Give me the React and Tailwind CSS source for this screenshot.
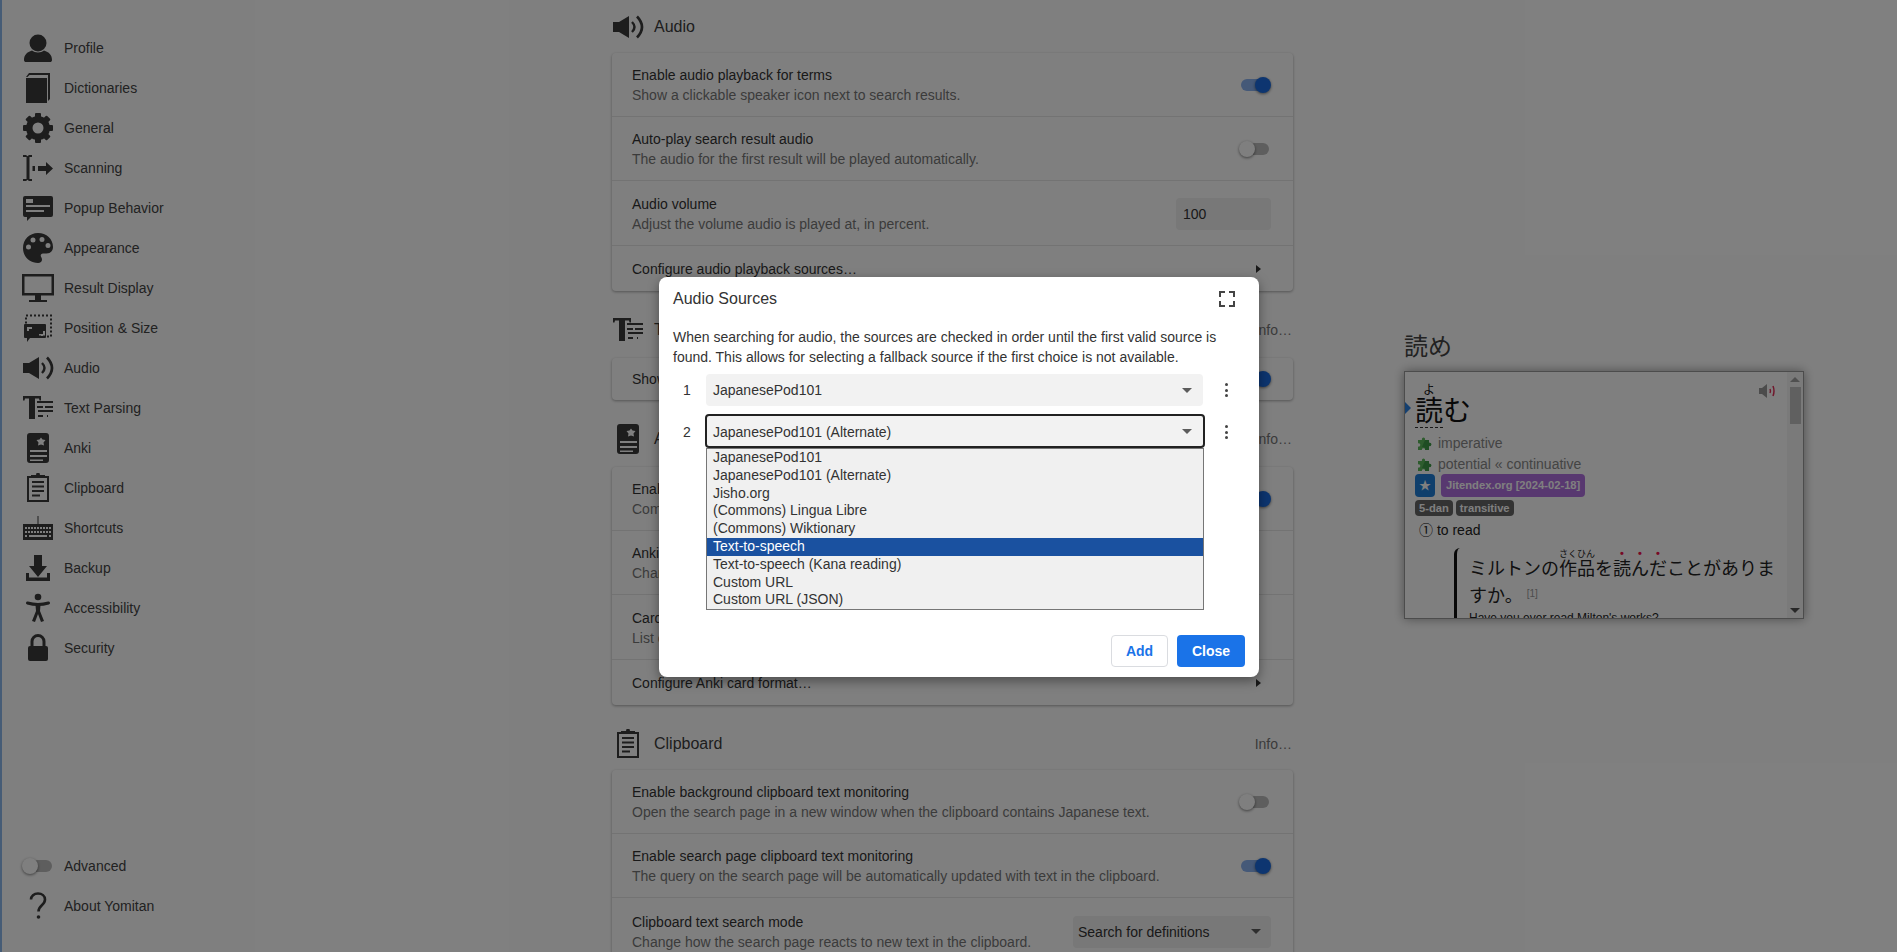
import React from "react";

const FONT = "[font-family:'Liberation_Sans',Arial,sans-serif]";

function circ(x, y, r) {
  return `M${x - r} ${y}a${r} ${r} 0 1 0 ${2 * r} 0a${r} ${r} 0 1 0 ${-2 * r} 0z`;
}

function Svg({ children, className = "w-8 h-8" }) {
  return (
    <svg viewBox="0 0 32 32" className={`${className} shrink-0 fill-[#3a3a3a] stroke-none`}>
      {children}
    </svg>
  );
}

const ProfileIcon = () => (
  <Svg>
    <circle cx="16" cy="11" r="8.5" />
    <path d="M2 28c0-5 3-8 8-9.500c3 2.500 9 2.500 12 0c5 1.500 8 4.500 8 9.500c0 1.500-1 2-2 2H4c-1 0-2-.5-2-2z" />
  </Svg>
);
const BookIcon = () => (
  <Svg>
    <path d="M4 5l3-4h21v26l-2 2V3H7.500L5.500 5z" />
    <path d="M4 6h21v25H4z" />
  </Svg>
);
const GearIcon = () => (
  <Svg>
    <circle cx="16" cy="16" r="8.750" className="fill-none stroke-[#3a3a3a]" strokeWidth="6.500" />
    {[0, 45, 90, 135, 180, 225, 270, 315].map((a) => (
      <rect key={a} x="13" y="1" width="6" height="6" rx="1" transform={`rotate(${a} 16 16)`} />
    ))}
  </Svg>
);
const ScanIcon = () => (
  <Svg>
    <path d="M1 3h3l1.500 1.200L7 3h3v2H7.500v22H10v2H7l-1.500-1.200L4 29H1v-2h3.500V5H1z" />
    <path d="M10.500 14h2.500v5h-2.500zM16 14h8v-4l7 6.500-7 6.500v-4h-8z" />
  </Svg>
);
const PopupIcon = () => (
  <Svg>
    <path
      fillRule="evenodd"
      d="M3 4h26a2 2 0 0 1 2 2v17a2 2 0 0 1-2 2H9l-4 4v-4H3a2 2 0 0 1-2-2V6a2 2 0 0 1 2-2zM4 7v4h7V7zM4 13v2h24v-2zM4 18v2h18v-2z"
    />
  </Svg>
);
const PaletteIcon = () => (
  <Svg>
    <path
      fillRule="evenodd"
      d={`M16 1C7.500 1 1 7.500 1 16s6.500 15 15 15c2.500 0 4-1.500 4-3.500 0-1-.5-2-1-2.800-.7-1.200-.2-3.200 2-3.200h3.500c4.500 0 6.500-3 6.500-6.500C31 7 24.500 1 16 1z${circ(6.500, 15, 2.500)}${circ(11, 8, 2.500)}${circ(20, 7.500, 2.500)}${circ(26, 13.500, 2.500)}`}
    />
  </Svg>
);
const MonitorIcon = () => (
  <Svg>
    <path
      fillRule="evenodd"
      d="M0 2h32v21.500H19V28h6v2H7v-2h6v-4.500H0zM2.500 4.500V21h27V4.500z"
    />
  </Svg>
);
const PositionIcon = () => (
  <Svg>
    <rect x="4" y="3.500" width="25" height="21" className="fill-none stroke-[#3a3a3a]" strokeWidth="2" strokeDasharray="2 2" />
    <path
      fillRule="evenodd"
      d="M3 12h20a1 1 0 0 1 1 1v12a1 1 0 0 1-1 1H8l-3 4v-4H3a1 1 0 0 1-1-1V13a1 1 0 0 1 1-1zM5 15v4h2v-2h3v-2zM21 19v3h-4v2h6v-5z"
    />
  </Svg>
);
const AudioIcon = () => (
  <Svg>
    <path d="M1 11h6l10-6v22L7 21H1z" />
    <path d="M20 11q5 5 0 10" className="fill-none stroke-[#3a3a3a]" strokeWidth="2.400" />
    <path d="M25 5.500q10 10.500 0 21" className="fill-none stroke-[#3a3a3a]" strokeWidth="2.600" />
  </Svg>
);
const ParseIcon = () => (
  <Svg>
    <path d="M1 4h18v4.500h-1.500L17 6.500h-4V27h-6V6.500H3L2.500 8.500H1z" />
    <path d="M15 10h16M15 15h6M23 15h8M16 19h15M16 24h5M25 24h1" className="fill-none stroke-[#3a3a3a]" strokeWidth="2" />
  </Svg>
);
const AnkiIcon = () => (
  <Svg>
    <path
      fillRule="evenodd"
      d="M8 1h16a3 3 0 0 1 3 3v24a3 3 0 0 1-3 3H8a3 3 0 0 1-3-3V4a3 3 0 0 1 3-3zM19 5.500l-1.500 2-3 .5 2 2.500-.5 3 3-1 3 1-.5-3 2-2.500-3-.5zM8 18v2h17v-2zM8 23v2h17v-2zM8 27.500v1.500h13v-1.500z"
    />
  </Svg>
);
const ClipIcon = () => (
  <Svg>
    <path d="M14.500 1h3l.5 2h5v3H9V3h5z" />
    <path d="M9 4H5v26h22V4h-4v2h2v22H7V6h2z" />
    <path d="M10 9h12v2H10zM10 13.500h12v2H10zM10 18h12v2H10zM10 22.500h8v2h-8z" />
  </Svg>
);
const KeyboardIcon = () => (
  <Svg>
    <path
      fillRule="evenodd"
      d={`M15.500 4h1v8H31v16H1V12h14.500z${[0, 1, 2, 3, 4, 5, 6, 7, 8]
        .map((i) => `M${3 + i * 3} 15h2v2h-2z`)
        .join("")}${[0, 1, 2, 3, 4, 5, 6, 7, 8]
        .map((i) => `M${3 + i * 3} 19h2v2h-2z`)
        .join("")}M3 23h2v2H3zM7 23h18v2H7zM27 23h2v2h-2z`}
    />
  </Svg>
);
const BackupIcon = () => (
  <Svg>
    <path d="M12 3h8v11h5l-9 11-9-11h5z" />
    <path d="M4 21h3v4.500h18V21h3v8H4z" />
  </Svg>
);
const AccessIcon = () => (
  <Svg>
    <circle cx="16" cy="5" r="3.300" />
    <path d="M5.500 11q10.500 3 21 0" className="fill-none stroke-[#3a3a3a]" strokeWidth="3" strokeLinecap="round" />
    <path d="M13.500 13h5l-.5 6 4 10-3 1-3-8-3 8-3-1 4-10z" />
  </Svg>
);
const LockIcon = () => (
  <Svg>
    <path d="M8 14a2 2 0 0 0-2 2v11a2 2 0 0 0 2 2h16a2 2 0 0 0 2-2V16a2 2 0 0 0-2-2z" />
    <path d="M10 15V9.500a6 6 0 0 1 12 0V15" className="fill-none stroke-[#3a3a3a]" strokeWidth="3" />
  </Svg>
);
const QuestionIcon = () => (
  <Svg>
    <path d="M9 9.500C9 6 12 3.500 16 3.500s7 2.500 7 6c0 6-6.500 5.500-6.500 12" className="fill-none stroke-[#3a3a3a]" strokeWidth="2.600" />
    <circle cx="16.500" cy="27" r="1.800" />
  </Svg>
);

function Toggle({ on, className = "mr-0.5" }) {
  return (
    <div className={`relative h-3 w-7 shrink-0 ${className}`}>
      <div className={`h-3 w-7 rounded-full ${on ? "bg-[#8ab2f0]" : "bg-[#bdbdbd]"}`} />
      <div
        className={`absolute -top-0.5 h-4 w-4 rounded-full shadow-[0_1px_3px_rgba(0,0,0,0.5)] ${
          on ? "-right-0.5 bg-[#1a6be0]" : "-left-0.5 bg-white"
        }`}
      />
    </div>
  );
}

const navTop = [
  ["Profile", ProfileIcon],
  ["Dictionaries", BookIcon],
  ["General", GearIcon],
  ["Scanning", ScanIcon],
  ["Popup Behavior", PopupIcon],
  ["Appearance", PaletteIcon],
  ["Result Display", MonitorIcon],
  ["Position & Size", PositionIcon],
  ["Audio", AudioIcon],
  ["Text Parsing", ParseIcon],
  ["Anki", AnkiIcon],
  ["Clipboard", ClipIcon],
  ["Shortcuts", KeyboardIcon],
  ["Backup", BackupIcon],
  ["Accessibility", AccessIcon],
  ["Security", LockIcon],
];

function NavItem({ label, children }) {
  return (
    <div className="flex h-10 items-center gap-2.5 pl-5 text-sm text-[#444]">
      {children}
      <span>{label}</span>
    </div>
  );
}

function Sidebar() {
  return (
    <aside className="flex h-full w-[612px] shrink-0 flex-col justify-between border-l-2 border-[#8cb8ec] pb-[26px] pt-[28px]">
      <nav>
        {navTop.map(([label, Icon]) => (
          <NavItem key={label} label={label}>
            <Icon />
          </NavItem>
        ))}
      </nav>
      <div>
        <NavItem label="Advanced">
          <div className="flex w-8 justify-center">
            <Toggle className="" />
          </div>
        </NavItem>
        <NavItem label="About Yomitan">
          <QuestionIcon />
        </NavItem>
      </div>
    </aside>
  );
}

function SectionHead({ icon, title, info, className = "mb-3 mt-[23px]" }) {
  return (
    <div className={`flex h-8 items-center gap-2.5 ${className}`}>
      {icon}
      <span className="flex-1 text-base text-[#3c3c3c]">{title}</span>
      {info && <span className="pr-px text-sm text-[#777]">Info…</span>}
    </div>
  );
}

function Card({ children }) {
  return (
    <div className="divide-y divide-[#e6e6e6] rounded bg-white shadow-[0_1px_3px_rgba(0,0,0,0.35)]">
      {children}
    </div>
  );
}

function Row({ title, desc, children, className = "h-16" }) {
  return (
    <div className={`flex items-center justify-between pl-5 pr-[22px] text-sm ${className}`}>
      <div>
        <div className="leading-5 text-[#333]">{title}</div>
        <div className="leading-5 text-[#777]">{desc}</div>
      </div>
      {children}
    </div>
  );
}

function LinkRow({ title }) {
  return (
    <div className="flex h-[45px] items-center justify-between pl-5 pr-[32px] text-sm text-[#333]">
      <span>{title}</span>
      <span className="h-0 w-0 border-y-[4.500px] border-l-[5px] border-y-transparent border-l-[#333]" />
    </div>
  );
}

function Caret({ className = "border-t-[#5c5c5c]" }) {
  return <span className={`h-0 w-0 border-x-[5px] border-t-[5px] border-x-transparent ${className}`} />;
}

function Main() {
  return (
    <main className="w-[681px] shrink-0">
      <SectionHead className="mb-2.5 mt-[11px]" icon={<AudioIcon />} title="Audio" />
      <Card>
        <Row title="Enable audio playback for terms" desc="Show a clickable speaker icon next to search results.">
          <Toggle on />
        </Row>
        <Row title="Auto-play search result audio" desc="The audio for the first result will be played automatically.">
          <Toggle />
        </Row>
        <Row className="h-[65px] pt-0.5" title="Audio volume" desc="Adjust the volume audio is played at, in percent.">
          <div className="flex h-8 w-[95px] items-center rounded bg-[#f0f0f0] pl-[7px] text-[#333]">100</div>
        </Row>
        <LinkRow title="Configure audio playback sources…" />
      </Card>

      <SectionHead icon={<ParseIcon />} title="Text Parsing" info />
      <Card>
        <div className="flex h-[42px] items-center justify-between pl-5 pr-[22px] text-sm text-[#333]">
          <span>Show space between parsed tokens</span>
          <Toggle on />
        </div>
      </Card>

      <SectionHead icon={<AnkiIcon />} title="Anki" info />
      <Card>
        <Row title="Enable Anki integration" desc="Commonly used with flashcards.">
          <Toggle on />
        </Row>
        <Row title="AnkiConnect server address" desc="Change the address of the server." />
        <Row className="h-[65px] pt-0.5" title="Card tags" desc="List of tags to add to each card." />
        <LinkRow title="Configure Anki card format…" />
      </Card>

      <SectionHead className="mb-2.5 mt-[23px]" icon={<ClipIcon />} title="Clipboard" info />
      <Card>
        <Row
          title="Enable background clipboard text monitoring"
          desc="Open the search page in a new window when the clipboard contains Japanese text."
        >
          <Toggle />
        </Row>
        <Row
          title="Enable search page clipboard text monitoring"
          desc="The query on the search page will be automatically updated with text in the clipboard."
        >
          <Toggle on />
        </Row>
        <Row
          className="h-[65px] pt-0.5"
          title="Clipboard text search mode"
          desc="Change how the search page reacts to new text in the clipboard."
        >
          <div className="flex h-8 w-[198px] items-center justify-between rounded bg-[#f0f0f0] pl-[5px] pr-2.5 text-[#333]">
            <span>Search for definitions</span>
            <Caret />
          </div>
        </Row>
      </Card>
    </main>
  );
}

function Puzzle() {
  return (
    <svg viewBox="0 0 16 16" className="h-4 w-4 shrink-0">
      <path d="M1 5h4c-1-3.500 4-3.500 3 0h4v3c3-1 3 4 0 3v4H8c1-2.500-4-2.500-3 0H1v-3.500c3 1 3-4 0-3z" fill="#5cb85c" />
      <path d="M8 5h4v3c3-1 3 4 0 3v4H8c1-2.500-1-3-3-3z" fill="#3f9a48" />
    </svg>
  );
}

function Preview() {
  return (
    <section className="ml-[111px] w-[400px] shrink-0 pt-[331px] [font-family:'Liberation_Sans','Noto_Sans_CJK_JP',sans-serif]">
      <div className="h-[40px] text-2xl leading-8 text-[#444]">読め</div>
      <div className="flex h-[248px] overflow-hidden border border-[#999] bg-white shadow-[0_0_10px_rgba(0,0,0,0.4)]">
        <div className="relative flex-1 overflow-hidden pl-2.5 pt-[11px]">
          <span className="absolute left-0 top-[30px] h-0 w-0 border-y-[6px] border-l-[6px] border-y-transparent border-l-[#2a80e0]" />
          <svg viewBox="0 0 18 14" className="absolute right-[10px] top-3 h-3.5 w-[18px]">
            <path d="M0 4h3l5-4v14l-5-4H0z" fill="#999" />
            <path d="M11 5q1 2 0 4M14 2q2 5 0 10" fill="none" stroke="#e03058" strokeWidth="1.500" />
          </svg>
          <div className="text-[28px] leading-[46px] text-[#111]">
            <ruby className="border-b border-dashed border-[#333]">
              読<rt className="text-xs leading-3">よ</rt>
            </ruby>
            む
          </div>
          <div className="-mt-[3px] flex h-[21px] items-center gap-[5px] pl-0.5 text-sm text-[#888]">
            <Puzzle />
            imperative
          </div>
          <div className="flex h-[21px] items-center gap-[5px] pl-0.5 text-sm text-[#888]">
            <Puzzle />
            potential « continuative
          </div>
          <div className="flex h-[23px] gap-1.5">
            <span className="flex w-5 items-center justify-center rounded bg-[#1e7fd8] text-xs text-white">★</span>
            <span className="flex items-center rounded bg-[#b070e0] px-[5px] text-[11.200px] font-bold text-white">
              Jitendex.org [2024-02-18]
            </span>
          </div>
          <div className="mt-[3px] flex h-4 gap-[3px] text-[11.200px] font-bold text-white">
            <span className="flex items-center rounded bg-[#666] px-[4px]">5-dan</span>
            <span className="flex items-center rounded bg-[#666] px-[4px]">transitive</span>
          </div>
          <div className="mt-1 pl-1 text-sm leading-5 text-[#222]">① to read</div>
          <div className="ml-[39px] mt-[8px] w-[338px] rounded-tl-md border-l-[3px] border-[#111] pl-3">
            <div className="text-lg leading-[27px] text-[#222]">
              ミルトンの
              <ruby>
                作品<rt className="text-[9px] leading-[9px]">さくひん</rt>
              </ruby>
              を
              {["読", "ん", "だ"].map((c) => (
                <ruby key={c}>
                  {c}
                  <rt className="text-[11px] font-bold leading-[9px] text-[#f0104a]">•</rt>
                </ruby>
              ))}
              ことがありますか。
              <sup className="ml-1 text-[10px] text-[#999]">[1]</sup>
            </div>
            <div className="text-xs leading-4 text-[#222]">Have you ever read Milton's works?</div>
          </div>
        </div>
        <div className="flex w-[16px] shrink-0 flex-col items-center bg-[#f4f4f4] py-[5px]">
          <Caret className="rotate-180 border-t-[#a0a0a0]" />
          <div className="mt-[5px] h-[37px] w-[11px] bg-[#c1c1c1]" />
          <div className="flex-1" />
          <Caret className="border-t-[#505050]" />
        </div>
      </div>
    </section>
  );
}

const sources = [
  "JapanesePod101",
  "JapanesePod101 (Alternate)",
  "Jisho.org",
  "(Commons) Lingua Libre",
  "(Commons) Wiktionary",
  "Text-to-speech",
  "Text-to-speech (Kana reading)",
  "Custom URL",
  "Custom URL (JSON)",
];

function Kebab() {
  return (
    <span className="flex flex-col gap-[2.500px]">
      <i className="h-[3px] w-[3px] rounded-full bg-[#444]" />
      <i className="h-[3px] w-[3px] rounded-full bg-[#444]" />
      <i className="h-[3px] w-[3px] rounded-full bg-[#444]" />
    </span>
  );
}

function Dialog() {
  return (
    <div className="absolute left-[659px] top-[277px] h-[400px] w-[600px] rounded-lg bg-white text-sm text-[#333] shadow-[0_4px_12px_rgba(0,0,0,0.4)]">
      <div className="flex items-start justify-between pl-[14px] pr-6 pt-[14px]">
        <span className="pt-px text-base [line-height:14px]">Audio Sources</span>
        <svg viewBox="0 0 16 16" className="h-4 w-4 fill-none stroke-[#444]" strokeWidth="2">
          <path d="M1 6V1h5M10 1h5v5M15 10v5h-5M6 15H1v-5" />
        </svg>
      </div>
      <p className="mt-5 px-[14px] leading-5 text-[#333]">
        When searching for audio, the sources are checked in order until the first valid source is found. This allows
        for selecting a fallback source if the first choice is not available.
      </p>
      <div className="mt-[7px] flex h-8 items-center pl-6">
        <span className="mr-[15px] w-2 text-center">1</span>
        <div className="flex h-8 w-[497px] items-center justify-between rounded bg-[#f2f2f2] px-[7px] pr-[11px]">
          <span>JapanesePod101</span>
          <Caret />
        </div>
        <span className="ml-[22px]">
          <Kebab />
        </span>
      </div>
      <div className="mt-2 flex h-[34px] items-center pl-6">
        <span className="mr-[14px] w-2 pt-0.5 text-center">2</span>
        <div className="flex h-[34px] w-[500px] items-center justify-between rounded border-2 border-[#222] bg-[#f2f2f2] px-1.5 pr-[11px]">
          <span className="pt-0.5">JapanesePod101 (Alternate)</span>
          <Caret />
        </div>
        <span className="ml-[19.500px] pt-0.5">
          <Kebab />
        </span>
      </div>
      <ul className="ml-[47px] w-[498px] border border-[#767676] bg-[#f0f0f0]">
        {sources.map((s, i) => (
          <li
            key={s}
            className={`pl-[6px] leading-[17px] ${i === 2 || i === 7 ? "h-[17px]" : "h-[18px]"} ${
              s === "Text-to-speech" ? "bg-[#1a51a0] text-white" : ""
            }`}
          >
            {s}
          </li>
        ))}
      </ul>
      <div className="mt-[25px] flex justify-end gap-[9px] pr-[14px]">
        <button className="h-8 w-[57px] rounded border border-[#dadce0] bg-white font-bold text-[#1a73e8]">Add</button>
        <button className="h-8 w-[68px] rounded bg-[#1a73e8] font-bold text-white">Close</button>
      </div>
    </div>
  );
}

export default function App() {
  return (
    <div className={`relative h-[952px] w-[1897px] overflow-hidden bg-white ${FONT}`}>
      <div className="flex h-full">
        <Sidebar />
        <Main />
        <Preview />
      </div>
      <div className="absolute inset-0 bg-black/50" />
      <Dialog />
    </div>
  );
}
